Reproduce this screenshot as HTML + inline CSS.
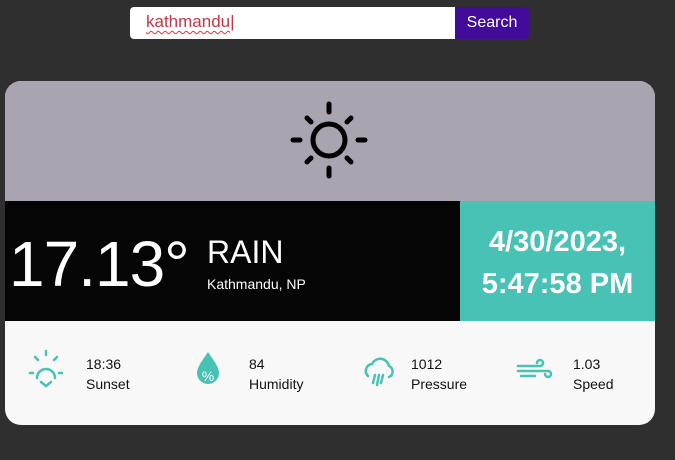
<!DOCTYPE html>
<html><head><meta charset="utf-8"><style>
*{margin:0;padding:0;box-sizing:border-box}
body{width:675px;height:460px;background:#2f2f2f;font-family:"Liberation Sans",sans-serif;position:relative;overflow:hidden}
.inp{position:absolute;left:130px;top:7px;width:325px;height:32px;background:#fff;border-radius:4px 0 0 4px;font-size:17px;color:#c0364a;padding:5px 0 0 16px}
.inp span{text-decoration:underline wavy #d33;text-underline-offset:3px;text-decoration-thickness:1px}
.btn{position:absolute;left:455px;top:7px;width:74px;height:32px;background:#430b9a;color:#fff;font-size:16px;text-align:center;line-height:31px;border-radius:0 4px 4px 0}
.card{position:absolute;left:5px;top:81px;width:650px;height:344px;border-radius:16px;overflow:hidden;background:#f8f8f8}
.top{height:120px;background:#aaa4b0;position:relative}
.mid{position:absolute;top:120px;left:0;width:455px;height:120px;background:#050505;color:#fff}
.dt{position:absolute;top:120px;left:455px;width:195px;height:120px;background:#47c2b5;color:#fff;font-weight:bold;font-size:29px;line-height:42px;text-align:center;padding-top:20px}
.temp{position:absolute;left:4px;top:26px;font-size:64px;font-weight:300;letter-spacing:-1px}
.rain{position:absolute;left:202px;top:33px;font-size:32px}
.loc{position:absolute;left:202px;top:75px;font-size:14px}
.it{position:absolute;top:272px;font-size:14px;color:#111;line-height:20px}
</style></head><body>
<div class="inp"><span>kathmandu</span>|</div>
<div class="btn">Search</div>
<div class="card">
<div class="top"><svg width="650" height="120" style="position:absolute;left:0;top:0"><g stroke="#000" stroke-width="5" stroke-linecap="round" fill="none"><circle cx="324" cy="59" r="16"/><line x1="324" y1="23" x2="324" y2="31"/><line x1="324" y1="87" x2="324" y2="95"/><line x1="288" y1="59" x2="295" y2="59"/><line x1="353" y1="59" x2="360" y2="59"/><line x1="302" y1="37" x2="306" y2="41"/><line x1="342" y1="77" x2="346" y2="81"/><line x1="346" y1="37" x2="342" y2="41"/><line x1="306" y1="77" x2="302" y2="81"/></g></svg></div>
<div class="mid"><div class="temp">17.13°</div><div class="rain">RAIN</div><div class="loc">Kathmandu, NP</div></div>
<div class="dt">4/30/2023,<br>5:47:58 PM</div>
<svg width="650" height="104" style="position:absolute;left:0;top:240px"><g stroke="#47c2b5" stroke-width="2.5" stroke-linecap="round" fill="none">
<path d="M32 57a9 9 0 0 1 18 0"/><line x1="41" y1="30" x2="41" y2="34"/><line x1="30" y1="36" x2="33" y2="39"/><line x1="52" y1="36" x2="49" y2="39"/><line x1="25" y1="52" x2="28" y2="52"/><line x1="54" y1="52" x2="57" y2="52"/><path d="M36 61l5 4 5-4"/>
<path d="M363 55a7 7 0 0 1 4-12a9 9 0 0 1 17 2a6 6 0 0 1 0 11"/><line x1="370" y1="54" x2="368" y2="62"/><line x1="374" y1="54" x2="372" y2="64"/><line x1="378" y1="54" x2="376" y2="62"/>
<path d="M513 45h22a3 3 0 1 0-3-3M513 50h30a3 3 0 1 1-3 3M516 55h14"/></g>
<path d="M203 31c-6 9-11 15-11 21a11 11 0 0 0 22 0c0-6-5-12-11-21z" fill="#47c2b5"/><text x="203" y="60" font-size="14" fill="#fff" text-anchor="middle" font-family="Liberation Sans">%</text></svg>
</div>
<div class="it" style="left:86px;top:354px">18:36<br>Sunset</div>
<div class="it" style="left:249px;top:354px">84<br>Humidity</div>
<div class="it" style="left:411px;top:354px">1012<br>Pressure</div>
<div class="it" style="left:573px;top:354px">1.03<br>Speed</div>
</body></html>
